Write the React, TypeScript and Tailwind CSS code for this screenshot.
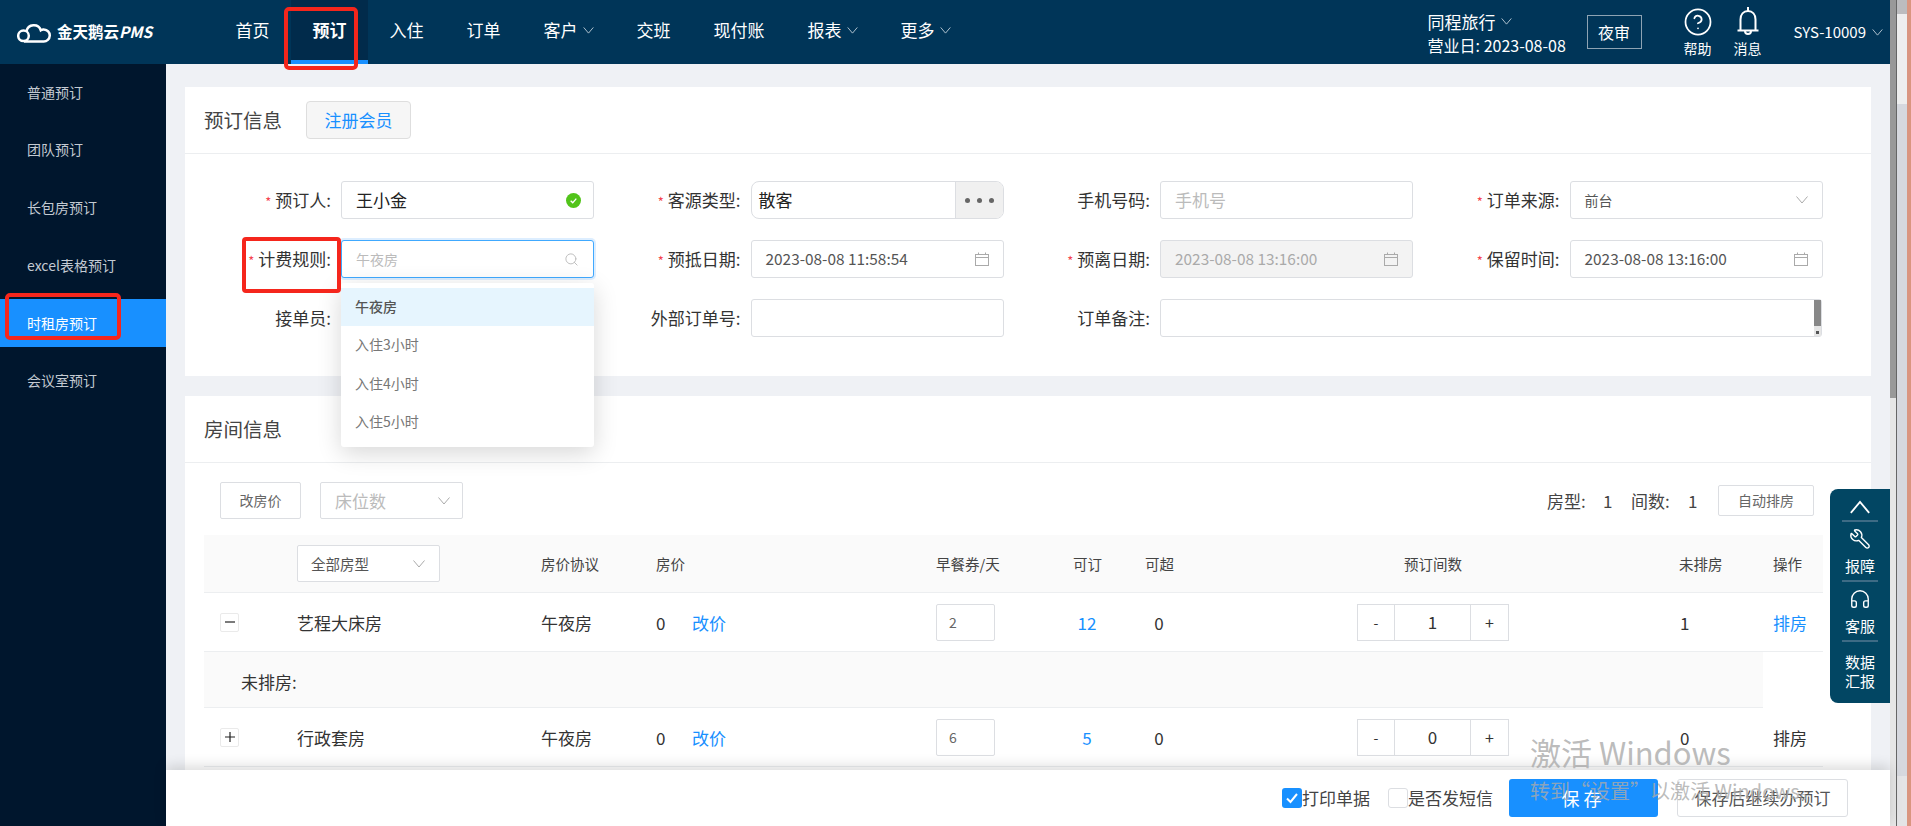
import React from 'react';
import { CircleHelp, Headphones, Search, Wrench } from 'lucide-react';

const tableCols = 'grid grid-cols-[93px_244px_115px_280px_137px_72px_212px_152px_170px_94px_50px] items-center';

const Chevron: React.FC<{ className?: string; width?: number }> = ({ className, width = 1 }) => (
  <svg viewBox="0 0 12 8" fill="none" stroke="currentColor" strokeWidth={width} className={className}>
    <path d="M0.5 0.5 L6 7 L11.5 0.5" />
  </svg>
);

const CalendarIcon: React.FC = () => (
  <svg viewBox="0 0 14 14" fill="none" stroke="#aaa" strokeWidth="1" className="w-[14px] h-[14px]">
    <rect x="0.5" y="2.5" width="13" height="11" />
    <path d="M0.5 5.5H13.5M3.5 0.5V2.5M10.5 0.5V2.5" />
  </svg>
);

const Logo: React.FC = () => (
  <svg viewBox="0 0 34 21" fill="none" stroke="#fff" strokeWidth="2.5" className="w-[34px] h-[21px]">
    <circle cx="6.5" cy="13.8" r="5.3" />
    <path d="M7 19.5H26.5A6 6 0 0 0 27 7.5C26 7.3 24.8 7.6 23.8 8.3A7.4 7.4 0 0 0 9.5 9.3" />
  </svg>
);

const Bell: React.FC = () => (
  <svg viewBox="0 0 22 28" fill="none" stroke="#fff" strokeWidth="2" className="w-[22px] h-[28px]">
    <path d="M11 0V4M3.5 23V12.5C3.5 7.5 6.5 4 11 4S18.5 7.5 18.5 12.5V23M0.5 23.5H21.5M8 24C8 28 14 28 14 24" />
  </svg>
);

const Req: React.FC = () => <span className="text-[#f5454f] text-[13px] mr-[4px]">*</span>;

const Field: React.FC<{ label: string; required?: boolean; wide?: boolean; children: React.ReactNode }> = ({
  label,
  required,
  wide,
  children,
}) => (
  <div className={`flex items-center h-[38px] ${wide ? 'col-span-2' : ''}`}>
    <label className="w-[146px] mr-[10px] text-right text-[17px] text-[#333] whitespace-nowrap">
      {required && <Req />}
      {label}:
    </label>
    {children}
  </div>
);

const boxCls = 'relative flex items-center h-[38px] border border-[#dcdee2] rounded-[3px]';

const DateBox: React.FC<{ value: string; disabled?: boolean }> = ({ value, disabled }) => (
  <div className={`${boxCls} w-[253px] pl-[14px] pr-[14px] justify-between text-[15.4px] ${disabled ? 'bg-[#f3f3f3] text-[#aaa]' : 'bg-white text-[#555]'}`}>
    <span>{value}</span>
    <CalendarIcon />
  </div>
);

const Stepper: React.FC<{ value: number }> = ({ value }) => (
  <div className="flex h-[37px] w-[152px] border border-[#dcdee2] text-[#333]">
    <div className="w-[37px] flex items-center justify-center border-r border-[#dcdee2] text-[14px]">-</div>
    <div className="flex-1 flex items-center justify-center border-r border-[#dcdee2] text-[17px]">{value}</div>
    <div className="w-[37px] flex items-center justify-center text-[16px]">+</div>
  </div>
);

const RoomRow: React.FC<{
  name: string;
  open?: boolean;
  coupon: number;
  avail: number;
  count: number;
  unassigned: number;
  active?: boolean;
}> = ({ name, open, coupon, avail, count, unassigned, active }) => (
  <div className={`${tableCols} h-[59px] border-b border-[#eceef0] text-[17px] text-[#333]`}>
    <div className="pl-[16px]">
      <div className="w-[19px] h-[19px] border border-[#eaeaea] rounded-[2px] flex items-center justify-center">
        <svg viewBox="0 0 12 12" fill="none" stroke="#222" strokeWidth="1.2" className="w-[12px] h-[12px]">
          <path d={open ? 'M1 6H11' : 'M1 6H11M6 1V11'} />
        </svg>
      </div>
    </div>
    <div className="pt-[2px]">{name}</div>
    <div className="pt-[2px]">午夜房</div>
    <div className="flex pt-[2px]">
      <span className="w-[36px]">0</span>
      <span className="text-[#1890ff]">改价</span>
    </div>
    <div>
      <div className="w-[59px] h-[37px] border border-[#dcdee2] rounded-[2px] flex items-center pl-[12px] text-[14px] text-[#666]">
        {coupon}
      </div>
    </div>
    <div className="w-[28px] pt-[2px] text-center text-[#1890ff]">{avail}</div>
    <div className="w-[28px] pt-[2px] text-center">0</div>
    <div>
      <Stepper value={count} />
    </div>
    <div />
    <div className="pl-[1px] pt-[2px]">{unassigned}</div>
    <div className={`pt-[2px] ${active ? 'text-[#1890ff]' : ''}`}>排房</div>
  </div>
);

const navItems = [
  { label: '首页' },
  { label: '预订', active: true },
  { label: '入住' },
  { label: '订单' },
  { label: '客户', arrow: true },
  { label: '交班' },
  { label: '现付账' },
  { label: '报表', arrow: true },
  { label: '更多', arrow: true },
];

const sideItems = ['普通预订', '团队预订', '长包房预订', 'excel表格预订', '时租房预订', '会议室预订'];

const App: React.FC = () => {
  return (
    <div className="relative flex h-screen w-full overflow-hidden bg-[#e4e5e9] font-['Noto_Sans_CJK_SC','Noto_Sans',sans-serif]">
      <div className="flex flex-col w-[1890px] shrink-0">
        {/* top bar */}
        <header className="flex items-stretch h-[64px] shrink-0 bg-[#003558] text-white">
          <div className="w-[214px] flex items-center pl-[17px]">
            <Logo />
            <span className="ml-[6px] text-[15.5px] font-bold whitespace-nowrap">
              金天鹅云<em>PMS</em>
            </span>
          </div>
          <nav className="flex">
            {navItems.map((item) => (
              <div
                key={item.label}
                className={`flex items-center pl-[21.5px] pr-[21.5px] text-[17px] whitespace-nowrap border-b-4 ${
                  item.active ? 'bg-[#012b4b] border-[#1890ff] font-bold' : 'border-transparent'
                }`}
              >
                {item.label}
                {item.arrow && <Chevron className="w-[11px] h-[7px] ml-[5px] text-[#c5d3dd]" />}
              </div>
            ))}
          </nav>
          <div className="ml-auto flex items-center pr-[7px]">
            <div className="w-[138px]">
              <div className="flex items-center text-[17px] leading-[24px]">
                同程旅行
                <Chevron className="w-[11px] h-[7px] ml-[5px] text-[#c5d3dd]" />
              </div>
              <div className="text-[16px] leading-[20px] mt-[1px] whitespace-nowrap">营业日: 2023-08-08</div>
            </div>
            <div className="ml-[21px] w-[55px] h-[34px] border border-[#8ea3b3] flex items-center justify-center text-[16px]">
              夜审
            </div>
            <div className="ml-[36px] w-[40px] flex flex-col items-center">
              <CircleHelp size={30} strokeWidth={1.4} />
              <span className="text-[14px] leading-[20px] mt-[1px]">帮助</span>
            </div>
            <div className="ml-[10px] w-[40px] flex flex-col items-center">
              <Bell />
              <span className="text-[14px] leading-[20px] mt-[3px]">消息</span>
            </div>
            <div className="ml-[26px] flex items-center text-[15px] whitespace-nowrap">
              SYS-10009
              <Chevron className="w-[11px] h-[7px] ml-[6px] text-[#c5d3dd]" />
            </div>
          </div>
        </header>

        <div className="flex flex-1 min-h-0">
          {/* side menu */}
          <aside className="w-[166px] shrink-0 bg-[#00162d] pt-[4px] flex flex-col gap-[9.8px]">
            {sideItems.map((item) => (
              <div
                key={item}
                className={`h-[48px] flex items-center pl-[27px] text-[14px] ${
                  item === '时租房预订' ? 'bg-[#1890ff] text-white' : 'text-[#c3cad2]'
                }`}
              >
                {item}
              </div>
            ))}
          </aside>

          <main className="relative flex-1 min-w-0 flex flex-col bg-[#eff1f5]">
            <div className="flex-1 min-h-0 overflow-hidden px-[19px] pt-[23px]">
              {/* booking info */}
              <section className="bg-white h-[289px]">
                <div className="h-[67px] flex items-center pl-[19px] border-b border-[#eceef0]">
                  <h2 className="text-[19.5px] text-[#444]">预订信息</h2>
                  <button className="ml-[24px] w-[105px] h-[38px] border border-[#dedede] rounded-[4px] bg-[#f6f6f6] text-[17px] text-[#1890ff]">
                    注册会员
                  </button>
                </div>
                <div className="grid grid-cols-[repeat(4,409.5px)] gap-y-[21px] pt-[27px]">
                  <Field label="预订人" required>
                    <div className={`${boxCls} bg-white w-[253px] pl-[14px] text-[17px] text-[#222]`}>
                      王小金
                      <svg viewBox="0 0 16 16" className="absolute right-[12px] w-[15px] h-[15px]">
                        <circle cx="8" cy="8" r="8" fill="#52c41a" />
                        <path d="M5 8.2L7.2 10.4L11 6" fill="none" stroke="#fff" strokeWidth="1.4" />
                      </svg>
                    </div>
                  </Field>
                  <Field label="客源类型" required>
                    <div className={`${boxCls} bg-white w-[253px] pl-[7px] text-[17px] text-[#222] rounded-[8px] overflow-hidden`}>
                      散客
                      <div className="absolute right-0 top-0 bottom-0 w-[48px] bg-[#f0f0f0] border-l border-[#dcdee2] flex items-center justify-center gap-[7px]">
                        <i className="w-[5px] h-[5px] rounded-full bg-[#666]" />
                        <i className="w-[5px] h-[5px] rounded-full bg-[#666]" />
                        <i className="w-[5px] h-[5px] rounded-full bg-[#666]" />
                      </div>
                    </div>
                  </Field>
                  <Field label="手机号码">
                    <div className={`${boxCls} bg-white w-[253px] pl-[14px] text-[17px] text-[#bbb]`}>手机号</div>
                  </Field>
                  <Field label="订单来源" required>
                    <div className={`${boxCls} bg-white w-[253px] px-[14px] justify-between text-[14px] text-[#555]`}>
                      前台
                      <Chevron className="w-[12px] h-[8px] text-[#aaa]" />
                    </div>
                  </Field>

                  <Field label="计费规则" required>
                    <div className="relative">
                      <div className={`${boxCls} bg-white w-[253px] px-[14px] justify-between text-[14px] text-[#bbb] !border-[#40a9ff] shadow-[0_0_0_2px_rgba(24,144,255,0.15)]`}>
                        午夜房
                        <Search size={15} strokeWidth={1.5} className="text-[#bbb]" />
                      </div>
                      <ul className="absolute z-20 left-0 top-[43px] w-[253px] h-[164px] bg-white rounded-[3px] pt-[5px] text-[14px] text-[#777] shadow-[0_6px_24px_rgba(0,0,0,0.16)]">
                        <li className="h-[38px] leading-[36px] pl-[14px] bg-[#e6f5fe] text-[#555] font-medium">午夜房</li>
                        <li className="h-[38.5px] leading-[36px] pl-[14px]">入住3小时</li>
                        <li className="h-[38.5px] leading-[36px] pl-[14px]">入住4小时</li>
                        <li className="h-[38.5px] leading-[36px] pl-[14px]">入住5小时</li>
                      </ul>
                    </div>
                  </Field>
                  <Field label="预抵日期" required>
                    <DateBox value="2023-08-08 11:58:54" />
                  </Field>
                  <Field label="预离日期" required>
                    <DateBox value="2023-08-08 13:16:00" disabled />
                  </Field>
                  <Field label="保留时间" required>
                    <DateBox value="2023-08-08 13:16:00" />
                  </Field>

                  <Field label="接单员">
                    <div className={`${boxCls} bg-white w-[253px]`} />
                  </Field>
                  <Field label="外部订单号">
                    <div className={`${boxCls} bg-white w-[253px]`} />
                  </Field>
                  <Field label="订单备注" wide>
                    <div className={`${boxCls} bg-white w-[662px] justify-end`}>
                      <div className="h-full w-[7px] flex flex-col items-center bg-[#e6e6e6]">
                        <div className="h-[26px] w-full bg-[#888]" />
                        <div className="mt-auto mb-[2px] w-[3px] h-[3px] bg-[#555]" />
                      </div>
                    </div>
                  </Field>
                </div>
              </section>

              {/* room info */}
              <section className="bg-white mt-[20px] h-[420px]">
                <div className="h-[67px] flex items-center pl-[19px] border-b border-[#eceef0]">
                  <h2 className="text-[19.5px] text-[#444]">房间信息</h2>
                </div>
                <div className="pl-[19px] pr-[48px]">
                  <div className="flex items-center h-[37px] mt-[19px] pl-[16px] pr-[9px]">
                    <button className="w-[81px] h-[37px] border border-[#dcdee2] rounded-[2px] text-[14px] text-[#666]">
                      改房价
                    </button>
                    <div className="ml-[19px] w-[143px] h-[37px] border border-[#dcdee2] rounded-[2px] flex items-center justify-between pl-[14px] pr-[12px] text-[17px] text-[#bbb]">
                      床位数
                      <Chevron className="w-[12px] h-[8px] text-[#aaa]" />
                    </div>
                    <div className="ml-auto flex text-[17px] text-[#444]">
                      <span className="w-[56px]">房型:</span>
                      <span className="w-[28px]">1</span>
                      <span className="w-[57px]">间数:</span>
                      <span className="w-[30px]">1</span>
                    </div>
                    <button className="w-[96px] h-[31px] border border-[#dcdee2] rounded-[2px] text-[14px] text-[#666]">
                      自动排房
                    </button>
                  </div>
                  <div className={`${tableCols} h-[58px] mt-[16px] bg-[#fafafa] border-b border-[#eceef0] text-[14.5px] text-[#444]`}>
                    <div />
                    <div>
                      <div className="w-[143px] h-[37px] bg-white border border-[#dcdee2] rounded-[2px] flex items-center justify-between pl-[13px] pr-[14px] text-[#555]">
                        全部房型
                        <Chevron className="w-[12px] h-[8px] text-[#aaa]" />
                      </div>
                    </div>
                    <div>房价协议</div>
                    <div>房价</div>
                    <div>早餐券/天</div>
                    <div>可订</div>
                    <div>可超</div>
                    <div className="text-center">预订间数</div>
                    <div />
                    <div>未排房</div>
                    <div>操作</div>
                  </div>
                  <RoomRow name="艺程大床房" open coupon={2} avail={12} count={1} unassigned={1} active />
                  <div className="h-[56px] w-[1559px] bg-[#fafafa] border-b border-[#eceef0] flex items-center pl-[37px] pt-[4px] text-[17px] text-[#333]">
                    未排房:
                  </div>
                  <RoomRow name="行政套房" coupon={6} avail={5} count={0} unassigned={0} />
                </div>
              </section>
            </div>

            {/* bottom bar */}
            <footer className="relative z-10 h-[56px] shrink-0 bg-white flex items-center justify-end pr-[42px] shadow-[0_-4px_12px_rgba(0,0,0,0.14)] text-[17px] text-[#444]">
              <span className="w-[20px] h-[20px] rounded-[3px] bg-[#1890ff] flex items-center justify-center">
                <svg viewBox="0 0 14 14" className="w-[14px] h-[14px]" fill="none" stroke="#fff" strokeWidth="2">
                  <path d="M2 7.5L5.5 11L12 3" />
                </svg>
              </span>
              <span>打印单据</span>
              <span className="ml-[18px] w-[20px] h-[20px] rounded-[3px] border border-[#dcdee2]" />
              <span>是否发短信</span>
              <button className="ml-[16px] w-[149px] h-[38px] rounded-[3px] bg-[#1890ff] text-white text-[18px] tracking-[4px]">
                保存
              </button>
              <button className="ml-[19px] w-[171px] h-[38px] rounded-[3px] border border-[#dcdee2] bg-white text-[#555]">
                保存后继续办预订
              </button>
            </footer>

            {/* floating tools */}
            <div className="absolute z-10 right-0 top-[425px] w-[60px] h-[214px] bg-[#024663] rounded-l-[8px] flex flex-col items-center text-white text-[15px]">
              <div className="h-[33px] w-[36px] border-b-2 border-[#3d6b85] flex items-start justify-center pt-[11px]">
                <Chevron className="w-[20px] h-[14px] rotate-180" width={1.1} />
              </div>
              <div className="h-[60px] w-[36px] border-b-2 border-[#3d6b85] flex flex-col items-center pt-[6px]">
                <Wrench size={22} strokeWidth={1.5} className="-scale-x-100" />
                <span className="leading-[20px] mt-[6px] whitespace-nowrap">报障</span>
              </div>
              <div className="h-[60px] w-[36px] border-b-2 border-[#3d6b85] flex flex-col items-center pt-[6px]">
                <Headphones size={22} strokeWidth={1.5} />
                <span className="leading-[20px] mt-[6px] whitespace-nowrap">客服</span>
              </div>
              <div className="pt-[10px] w-[36px] text-center leading-[19px]">数据 汇报</div>
            </div>
          </main>
        </div>
      </div>

      {/* what shows of the window behind */}
      <div className="w-[6px] shrink-0 flex flex-col bg-[#e6e6e6]">
        <div className="h-[398px] bg-[#999]" />
      </div>
      <div className="w-[1px] shrink-0 bg-[#666]" />
      <div className="flex-1 flex flex-col bg-[#e4e5e9]">
        <div className="h-[14px] bg-[#bcbcbe]" />
        <div className="h-[90px] bg-[#eeeeee]" />
        <div className="h-[672px] bg-[#d6d8de]" />
        <div className="flex-1 bg-[#e4e4e6]" />
      </div>
      <div className="w-[4px] shrink-0 bg-[#da9580]" />

      {/* marks drawn over the screenshot */}
      <div className="absolute z-30 left-[284px] top-[7px] w-[74px] h-[63px] border-[4px] border-[#f5261c] rounded-[5px]" />
      <div className="absolute z-30 left-[242px] top-[237px] w-[99px] h-[56px] border-[4px] border-[#f5261c] rounded-[4px]" />
      <div className="absolute z-30 left-[5px] top-[293px] w-[116px] h-[47px] border-[4px] border-[#f5261c] rounded-[5px]" />
      <div className="absolute z-40 left-[1530px] top-[729px] pointer-events-none text-[#aaaaaa]/80 whitespace-nowrap">
        <div className="text-[31px] leading-[46px]">激活 Windows</div>
        <div className="text-[20px] leading-[28px] mt-[2px]">转到“设置”以激活 Windows。</div>
      </div>
    </div>
  );
};

export default App;
